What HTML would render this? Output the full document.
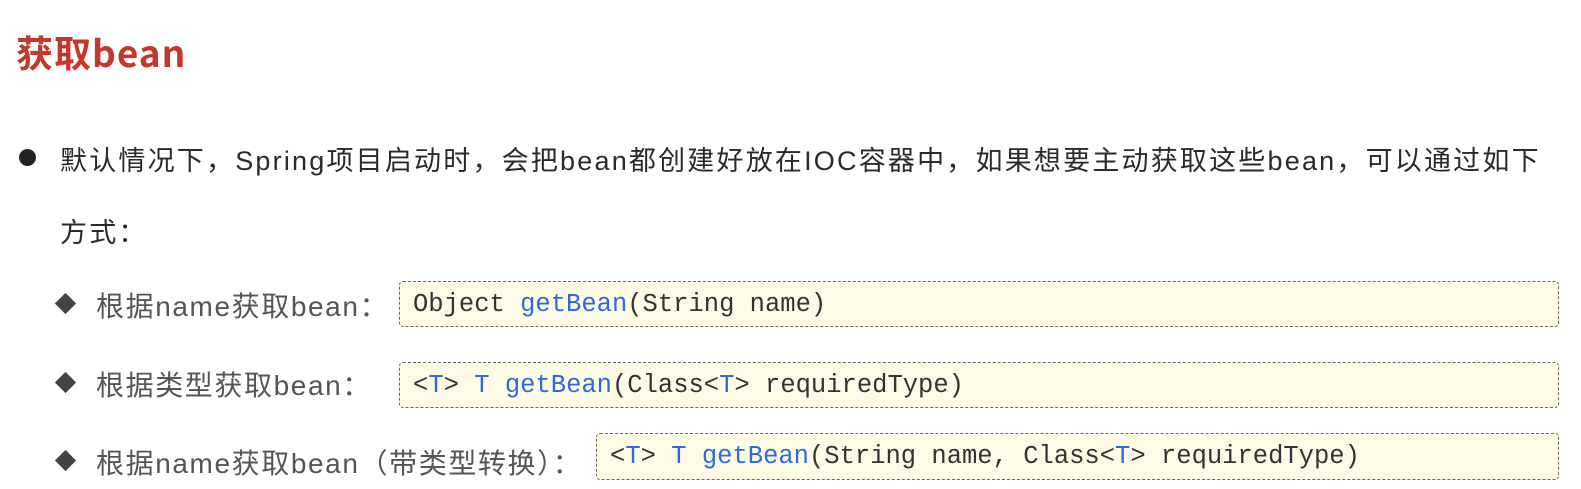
<!DOCTYPE html>
<html><head><meta charset="utf-8"><style>
body{margin:0;width:1581px;height:489px;background:#fff;position:relative;overflow:hidden;font-family:"Liberation Sans","Noto Sans CJK SC",sans-serif;}
.a{position:absolute;white-space:nowrap;}
h1{position:absolute;left:16px;top:26px;margin:0;font-size:37px;font-weight:bold;color:#c0392b;letter-spacing:1px;font-family:"Noto Sans CJK SC",sans-serif;line-height:50px;}
.t{font-size:27px;color:#2a2a2a;letter-spacing:2.2px;}
.s{font-size:28px;color:#555;letter-spacing:1.6px;}
.dot{position:absolute;left:19px;top:149px;width:17px;height:17px;border-radius:50%;background:#222;}
.dia{position:absolute;width:15px;height:15px;background:#444;transform:rotate(45deg);}
.box{position:absolute;background:#fdfbe6;border:1.5px dashed #666;border-radius:4px;box-sizing:border-box;font-family:"Liberation Mono",monospace;font-size:25.5px;color:#333;padding-left:13px;display:flex;align-items:center;white-space:pre;}
.b{color:#2f6ad6;}
</style></head><body>
<h1>获取bean</h1>
<div class="dot"></div>
<div class="a t" style="left:60px;top:139px;">默认情况下，Spring项目启动时，会把bean都创建好放在IOC容器中，如果想要主动获取这些bean，可以通过如下</div>
<div class="a t" style="left:60px;top:211px;">方式：</div>
<div class="dia" style="left:58px;top:296px;"></div>
<div class="a s" style="left:96px;top:285px;">根据name获取bean：</div>
<div class="dia" style="left:58px;top:375px;"></div>
<div class="a s" style="left:96px;top:364px;">根据类型获取bean：</div>
<div class="dia" style="left:58px;top:453px;"></div>
<div class="a s" style="left:96px;top:442px;">根据name获取bean（带类型转换）：</div>
<div class="box" style="left:399px;top:281px;width:1160px;height:46px;"><span>Object <span class="b">getBean</span>(String name)</span></div>
<div class="box" style="left:399px;top:362px;width:1160px;height:46px;"><span>&lt;<span class="b">T</span>&gt; <span class="b">T</span> <span class="b">getBean</span>(Class&lt;<span class="b">T</span>&gt; requiredType)</span></div>
<div class="box" style="left:596px;top:433px;width:963px;height:47px;"><span>&lt;<span class="b">T</span>&gt; <span class="b">T</span> <span class="b">getBean</span>(String name, Class&lt;<span class="b">T</span>&gt; requiredType)</span></div>
</body></html>
